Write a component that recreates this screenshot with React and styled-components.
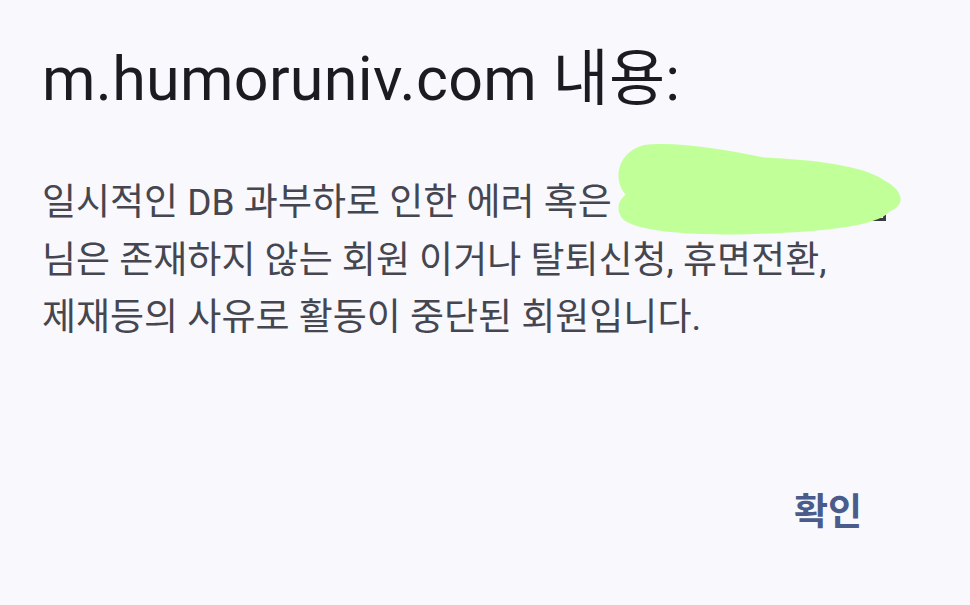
import React from 'react'
import styled, { createGlobalStyle } from 'styled-components'

const GlobalStyle = createGlobalStyle`
    html, body {
        margin: 0;
        padding: 0;
        background: #f8f8fd;
    }
    body {
        font-family: Roboto, "Noto Sans CJK KR", sans-serif;
    }
`;

const App = () => {
    return (
        <Dialog>
            <GlobalStyle />
            <Title>m.humoruniv.com 내용:</Title>
            <Message>
                일시적인 DB 과부하로 인한 에러 혹은 <Redacted>
                    <Blob viewBox="0 0 287 90" preserveAspectRatio="none">
                        <path
                            d="M30 2 C60 -2 110 6 150 14 C200 16 250 22 270 36 C290 46 292 60 276 66 C262 82 200 86 140 88 C80 90 30 86 12 76 C2 70 2 56 12 50 C0 40 0 10 30 2 Z"
                            fill="#c1ff99"
                        />
                    </Blob>
                </Redacted>
                <br />
                님은 존재하지 않는 회원 이거나 탈퇴신청, 휴면전환,
                <br />
                제재등의 사유로 활동이 중단된 회원입니다.
            </Message>
            <Actions>
                <ConfirmButton>확인</ConfirmButton>
            </Actions>
        </Dialog>
    )
}

const Dialog = styled.div`
    width: 970px;
    height: 605px;
    box-sizing: border-box;
    padding: 43px 42px 0 42px;
    display: flex;
    flex-direction: column;
    background: #f8f8fd;
`;

const Title = styled.h1`
    margin: 0;
    font-size: 61px;
    line-height: 72px;
    font-weight: 400;
    color: #1b1b21;
    letter-spacing: 0.3px;
`;

const Message = styled.p`
    margin: 59px 0 0 0;
    font-size: 37px;
    line-height: 57.5px;
    color: #45464f;
    font-weight: 400;
`;

const Redacted = styled.span`
    position: relative;
    display: inline-block;
    width: 257px;
    height: 32px;
    margin-left: 8px;
    vertical-align: -6px;
    border: 3px solid #3a3b44;
    border-top: none;
    box-sizing: border-box;
`;

const Blob = styled.svg`
    position: absolute;
    left: -18px;
    top: -46px;
    width: 287px;
    height: 93px;
`;

const Actions = styled.div`
    display: flex;
    justify-content: flex-end;
    margin-top: 135px;
    padding-right: 66px;
`;

const ConfirmButton = styled.button`
    border: none;
    background: transparent;
    padding: 0;
    font-family: Roboto, "Noto Sans CJK KR", sans-serif;
    font-size: 37px;
    font-weight: 700;
    color: #4a5c8c;
    cursor: pointer;
`;

export default App;
